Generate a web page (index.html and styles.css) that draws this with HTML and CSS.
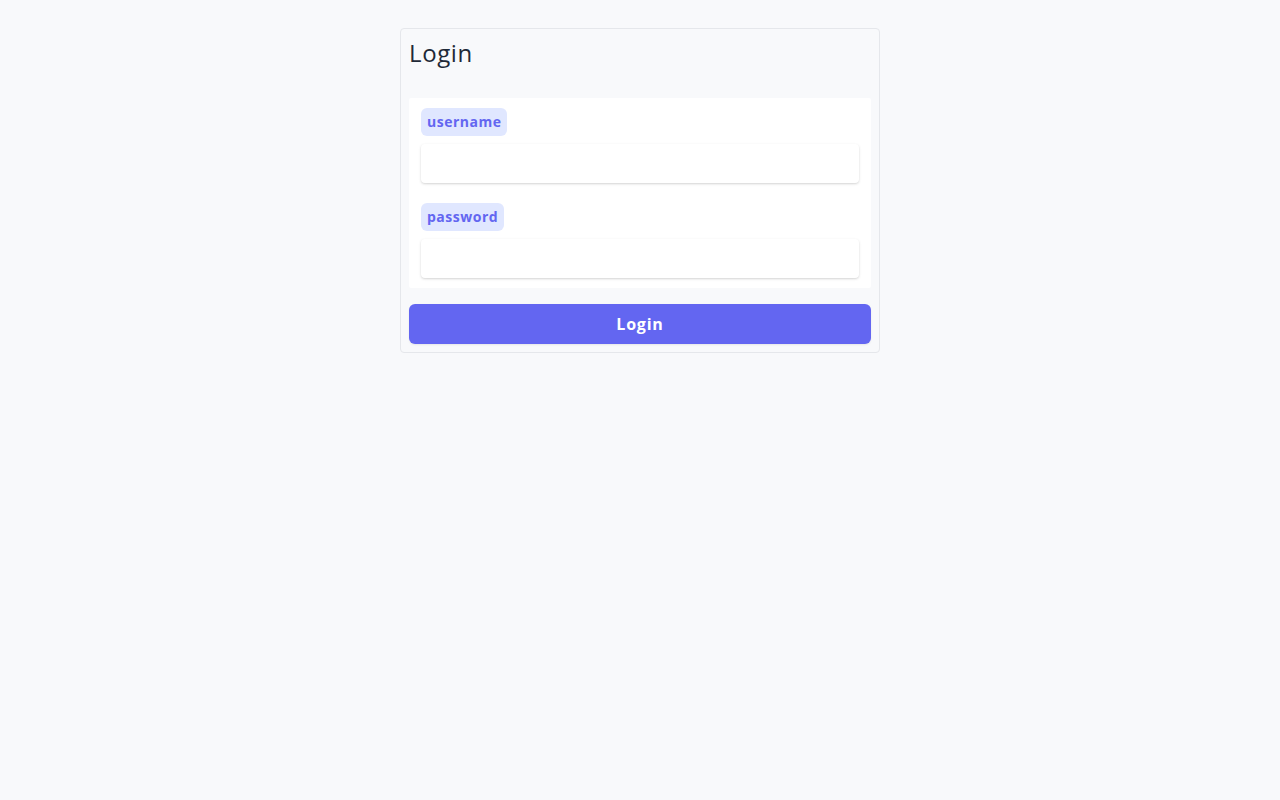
FILE: index.html
```html
<!DOCTYPE html>
<html lang="en">
<head>
<meta charset="utf-8">
<title>Login</title>
<link rel="stylesheet" href="styles.css">
</head>
<body>
<main class="page">
  <form class="card">
    <h1 class="card-title">Login</h1>
    <div class="fields">
      <div class="field">
        <label class="badge" for="username">username</label>
        <input class="input" id="username" type="text">
      </div>
      <div class="field">
        <label class="badge" for="password">password</label>
        <input class="input" id="password" type="password">
      </div>
    </div>
    <button class="btn" type="button">Login</button>
  </form>
</main>
</body>
</html>
```

FILE: styles.css
```css
* { box-sizing: border-box; }
html, body { margin: 0; padding: 0; }
body {
  background: #f8f9fb;
  font-family: "Open Sans", "Liberation Sans", sans-serif;
  color: #1f2937;
  min-height: 800px;
}
.page {
  display: flex;
  justify-content: center;
  padding-top: 28px;
}
.card {
  width: 480px;
  border: 1px solid #e5e7eb;
  border-radius: 4px;
  background: #f8f9fb;
  padding: 8px;
  display: flex;
  flex-direction: column;
}
.card-title {
  margin: 0;
  font-size: 24px;
  font-weight: 400;
  letter-spacing: 0.6px;
  line-height: 32px;
  color: #1f2937;
  height: 61px;
}
.fields {
  background: #ffffff;
  padding: 10px 12px;
  display: flex;
  flex-direction: column;
  gap: 20px;
  border-radius: 2px;
}
.field {
  display: flex;
  flex-direction: column;
  align-items: flex-start;
  gap: 8px;
}
.badge {
  background: #e0e7ff;
  color: #6366f1;
  font-weight: 700;
  font-size: 14px;
  letter-spacing: 0.5px;
  line-height: 28px;
  height: 28px;
  padding: 0 6px;
  border-radius: 6px;
}
.input {
  width: 100%;
  height: 39px;
  border: none;
  background: #fff;
  border-radius: 4px;
  box-shadow: 0 1px 3px rgba(0,0,0,0.12), 0 1px 2px rgba(0,0,0,0.06);
  font: inherit;
  padding: 0 10px;
  outline: none;
}
.btn {
  margin-top: 16px;
  height: 40px;
  border: none;
  border-radius: 6px;
  background: #6366f1;
  color: #fff;
  font-family: inherit;
  font-weight: 700;
  font-size: 16px;
  letter-spacing: 0.8px;
  box-shadow: 0 1px 2px rgba(0,0,0,0.08);
}
```
